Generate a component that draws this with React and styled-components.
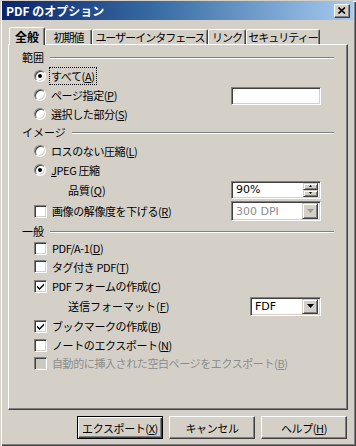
import React from 'react';
import styled, { createGlobalStyle } from 'styled-components';

// palette of the classic dialog
const FACE = '#D4D0C8';
const SHADOW = '#808080';
const DARK = '#404040';

const Global = createGlobalStyle`
  body {
    margin: 0;
    background: ${FACE};
    font-family: "Noto Sans CJK JP", "DejaVu Sans", sans-serif;
    font-size: 11px;
    color: #000;
  }
`;

const Window = styled.div`
  width: 356px;
  height: 446px;
  box-sizing: border-box;
  padding: 1px 3px 0 2px;
  background: ${FACE};
  box-shadow: inset 1px 1px ${FACE}, inset 2px 2px #fff, inset -1px -1px ${DARK}, inset -2px -2px ${SHADOW};
  display: flex;
  flex-direction: column;
`;

const TitleBar = styled.div`
  height: 19px;
  display: flex;
  align-items: center;
  padding: 0 3px 0 4px;
  background: linear-gradient(to right, #0A246A, #3A6EA5 45%, #A6CAF0);
  color: #fff;
  font-weight: bold;
  font-size: 12px;
`;

const CloseBtn = styled.div`
  margin-left: auto;
  width: 16px;
  height: 14px;
  box-sizing: border-box;
  background: ${FACE};
  border: 1px solid;
  border-color: #fff ${DARK} ${DARK} #fff;
  box-shadow: inset -1px -1px ${SHADOW};
  display: flex;
  align-items: center;
  justify-content: center;
`;

const Content = styled.div`
  display: flex;
  flex-direction: column;
  padding: 7px 5px 0 6px;
`;

const TabStrip = styled.div`
  display: flex;
  align-items: flex-end;
  height: 17px;
  padding-left: 1px;
  position: relative;
  z-index: 1;
`;

const Tab = styled.div`
  width: ${p => p.$w}px;
  height: ${p => (p.$active ? 18 : 15)}px;
  margin-bottom: ${p => (p.$active ? -1 : 0)}px;
  box-sizing: border-box;
  background: ${FACE};
  border: 1px solid;
  border-bottom: none;
  border-color: #fff ${DARK} transparent #fff;
  border-radius: 2px 2px 0 0;
  box-shadow: inset -1px 0 ${SHADOW};
  display: flex;
  align-items: center;
  justify-content: center;
  font-weight: ${p => (p.$active ? 'bold' : 'normal')};
  font-size: ${p => (p.$active ? 12 : 11)}px;
  letter-spacing: ${p => (p.$active ? 0 : -1)}px;
  white-space: nowrap;
`;

const Panel = styled.div`
  height: 366px;
  box-sizing: border-box;
  border: 1px solid;
  border-color: #fff ${DARK} ${DARK} #fff;
  box-shadow: inset -1px -1px ${SHADOW};
  padding: 3px 13px 0 13px;
  display: flex;
  flex-direction: column;
`;

const Heading = styled.div`
  height: ${p => p.$h}px;
  display: flex;
  align-items: center;
  gap: 6px;
  &::after {
    content: '';
    flex: 1;
    border-top: 1px solid ${SHADOW};
    border-bottom: 1px solid #fff;
    margin-top: 2px;
  }
`;

const Row = styled.div`
  height: ${p => p.$h}px;
  display: flex;
  align-items: center;
  padding-left: ${p => p.$indent || 12}px;
  padding-right: 13px;
  color: ${p => (p.$disabled ? '#8c8c8c' : '#000')};
  white-space: nowrap;
`;

const Label = styled.span`
  margin-left: 4px;
  padding: 0 1px;
  letter-spacing: -0.4px;
  outline: ${p => (p.$focus ? '1px dotted #000' : 'none')};
`;

const RadioCircle = styled.span`
  width: 12px;
  height: 12px;
  box-sizing: border-box;
  border-radius: 50%;
  background: #fff;
  border: 1px solid;
  border-color: ${SHADOW} #fff #fff ${SHADOW};
  box-shadow: inset 1px 1px ${DARK}, inset -1px -1px ${FACE};
  display: flex;
  align-items: center;
  justify-content: center;
  &::after {
    content: '';
    width: 4px;
    height: 4px;
    border-radius: 50%;
    background: ${p => (p.$on ? '#000' : 'transparent')};
  }
`;

const Box = styled.span`
  width: 13px;
  height: 13px;
  box-sizing: border-box;
  flex-shrink: 0;
  background: ${p => (p.$disabled ? '#C9C9C2' : '#fff')};
  border: 1px solid;
  border-color: ${SHADOW} #fff #fff ${SHADOW};
  box-shadow: inset 1px 1px ${DARK}, inset -1px -1px ${FACE};
  display: flex;
  align-items: center;
  justify-content: center;
`;

const Field = styled.div`
  margin-left: auto;
  width: ${p => p.$w}px;
  height: ${p => p.$h}px;
  margin-top: ${p => p.$dy || 0}px;
  box-sizing: border-box;
  background: #fff;
  border: 1px solid;
  border-color: ${SHADOW} #fff #fff ${SHADOW};
  box-shadow: inset 1px 1px ${DARK}, inset -1px -1px ${FACE};
  padding: 2px;
  display: flex;
  align-items: center;
  color: ${p => (p.$disabled ? '#8c8c8c' : '#000')};
  font-family: "DejaVu Sans", sans-serif;
  font-size: 11px;
`;

const FieldText = styled.span`
  flex: 1;
  padding-left: 2px;
`;

const RaisedBtn = styled.div`
  width: ${p => p.$w}px;
  height: ${p => p.$h}px;
  box-sizing: border-box;
  background: ${FACE};
  border: 1px solid;
  border-color: ${FACE} ${DARK} ${DARK} ${FACE};
  box-shadow: inset 1px 1px #fff, inset -1px -1px ${SHADOW};
  display: flex;
  align-items: center;
  justify-content: center;
`;

const SpinCol = styled.div`
  display: flex;
  flex-direction: column;
`;

const ButtonRow = styled.div`
  display: flex;
  justify-content: flex-end;
  gap: 6px;
  margin-top: 6px;
  padding-right: 1px;
`;

const Button = styled.div`
  width: 86px;
  height: 23px;
  box-sizing: border-box;
  background: ${FACE};
  border: 1px solid;
  border-color: ${p => (p.$default ? '#000' : `#fff ${DARK} ${DARK} #fff`)};
  box-shadow: ${p => (p.$default
    ? `inset 1px 1px #fff, inset -1px -1px ${DARK}, inset -2px -2px ${SHADOW}`
    : `inset -1px -1px ${SHADOW}`)};
  display: flex;
  align-items: center;
  justify-content: center;
  letter-spacing: -0.4px;
`;

const Arrow = ({ color = '#000' }) => (
  <svg width="7" height="4" viewBox="0 0 7 4"><path d="M0 0h7L3.5 4z" fill={color} /></svg>
);

const TinyArrow = ({ up }) => (
  <svg width="3" height="2" viewBox="0 0 3 2">
    <path d={up ? 'M1.5 0L3 2H0z' : 'M0 0h3L1.5 2z'} fill="#000" />
  </svg>
);

const Check = () => (
  <svg width="7" height="7" viewBox="0 0 7 7">
    <path d="M0 2.5l2.5 2.5L7 0.5v2L2.5 7L0 4.5z" fill="#000" />
  </svg>
);

const Radio = ({ on, children, focus }) => (
  <>
    <RadioCircle $on={on} />
    <Label $focus={focus}>{children}</Label>
  </>
);

const CheckBox = ({ on, disabled, children }) => (
  <>
    <Box $disabled={disabled}>{on && <Check />}</Box>
    <Label>{children}</Label>
  </>
);

const tabs = [
  { label: '全般', w: 36, active: true },
  { label: '初期値', w: 47 },
  { label: 'ユーザーインタフェース', w: 116 },
  { label: 'リンク', w: 38 },
  { label: 'セキュリティー', w: 74 },
];

export default function App() {
  return (
    <>
      <Global />
      <Window>
        <TitleBar>
          PDF のオプション
          <CloseBtn>
            <svg width="8" height="7" viewBox="0 0 8 7">
              <path d="M0.5 0.5L7 6.5M7 0.5L0.5 6.5" stroke="#000" strokeWidth="1.6" />
            </svg>
          </CloseBtn>
        </TitleBar>
        <Content>
          <TabStrip>
            {tabs.map(t => (
              <Tab key={t.label} $w={t.w} $active={t.active}>{t.label}</Tab>
            ))}
          </TabStrip>
          <Panel>
            <Heading $h={18}>範囲</Heading>
            <Row $h={19}><Radio on focus>すべて(<u>A</u>)</Radio></Row>
            <Row $h={19}>
              <Radio>ページ指定(<u>P</u>)</Radio>
              <Field $w={90} $h={18} $dy={3} />
            </Row>
            <Row $h={19}><Radio>選択した部分(<u>S</u>)</Radio></Row>

            <Heading $h={18}>イメージ</Heading>
            <Row $h={19}><Radio>ロスのない圧縮(<u>L</u>)</Radio></Row>
            <Row $h={19}><Radio on><u>J</u>PEG 圧縮</Radio></Row>
            <Row $h={21} $indent={46}>
              品質(<u>Q</u>)
              <Field $w={90} $h={18}>
                <FieldText>90%</FieldText>
                <SpinCol>
                  <RaisedBtn $w={15} $h={7}><TinyArrow up /></RaisedBtn>
                  <RaisedBtn $w={15} $h={7}><TinyArrow /></RaisedBtn>
                </SpinCol>
              </Field>
            </Row>
            <Row $h={22}>
              <CheckBox>画像の解像度を下げる(<u>R</u>)</CheckBox>
              <Field $w={90} $h={20} $disabled>
                <FieldText>300 DPI</FieldText>
                <RaisedBtn $w={16} $h={16}><Arrow color="#9a9a9a" /></RaisedBtn>
              </Field>
            </Row>

            <Heading $h={17}>一般</Heading>
            <Row $h={18}><CheckBox>PDF/A-1(<u>D</u>)</CheckBox></Row>
            <Row $h={19}><CheckBox>タグ付き PDF(<u>T</u>)</CheckBox></Row>
            <Row $h={20}><CheckBox on>PDF フォームの作成(<u>C</u>)</CheckBox></Row>
            <Row $h={20} $indent={46}>
              送信フォーマット(<u>F</u>)
              <Field $w={71} $h={19}>
                <FieldText>FDF</FieldText>
                <RaisedBtn $w={16} $h={15}><Arrow /></RaisedBtn>
              </Field>
            </Row>
            <Row $h={20}><CheckBox on>ブックマークの作成(<u>B</u>)</CheckBox></Row>
            <Row $h={18}><CheckBox>ノートのエクスポート(<u>N</u>)</CheckBox></Row>
            <Row $h={18} $disabled>
              <CheckBox disabled>自動的に挿入された空白ページをエクスポート(<u>B</u>)</CheckBox>
            </Row>
          </Panel>
          <ButtonRow>
            <Button $default>エクスポート(<u>X</u>)</Button>
            <Button>キャンセル</Button>
            <Button>ヘルプ(<u>H</u>)</Button>
          </ButtonRow>
        </Content>
      </Window>
    </>
  );
}
